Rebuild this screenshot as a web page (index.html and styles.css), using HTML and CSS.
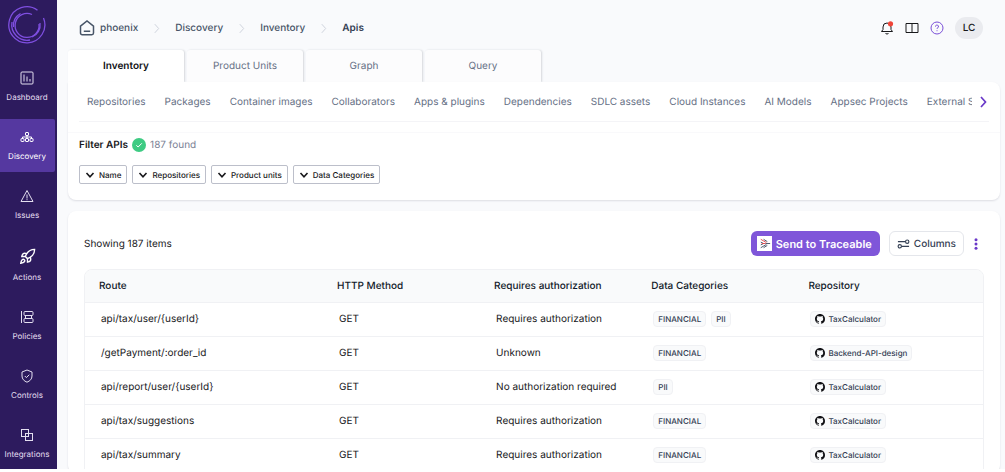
FILE: index.html
```
<!DOCTYPE html>
<html lang="en">
<head>
    <meta charset="UTF-8">
    <meta name="viewport" content="width=device-width, initial-scale=1.0">
    <title>Inventory - Apis</title>
    <link rel="stylesheet" href="styles.css">
</head>
<body>
    <!-- shared icons -->
    <svg class="sprite" aria-hidden="true">
        <symbol id="chevron-right" viewBox="0 0 8 12"><path d="M2 1l4.500 5L2 11"/></symbol>
        <symbol id="chevron-down" viewBox="0 0 10 8"><path d="M1.500 2L5 5.800 8.500 2"/></symbol>
        <symbol id="github" viewBox="0 0 16 16"><path d="M8 0C3.580 0 0 3.580 0 8c0 3.540 2.290 6.530 5.470 7.590.4.070.55-.17.55-.38 0-.19-.01-.82-.01-1.490-2.010.37-2.530-.49-2.690-.94-.09-.23-.48-.94-.82-1.130-.28-.15-.68-.52-.01-.53.63-.01 1.080.58 1.230.82.72 1.210 1.870.87 2.330.66.07-.52.28-.87.51-1.070-1.780-.2-3.640-.89-3.640-3.950 0-.87.31-1.590.82-2.150-.08-.2-.36-1.020.08-2.120 0 0 .67-.21 2.200.82A7.600 7.600 0 0 1 8 3.870c.68 0 1.360.09 2 .27 1.530-1.040 2.200-.82 2.200-.82.44 1.100.16 1.920.08 2.120.51.56.82 1.270.82 2.150 0 3.070-1.870 3.750-3.650 3.950.29.25.54.73.54 1.480 0 1.070-.01 1.930-.01 2.200 0 .21.15.46.55.38A8 8 0 0 0 16 8c0-4.420-3.580-8-8-8z"/></symbol>
    </svg>

    <div class="app">
        <aside class="sidebar">
            <a href="#" class="logo" aria-label="Home">
                <svg viewBox="0 0 38 38">
                    <path d="M29.500 4.300A18 18 0 1 0 35.500 12"/>
                    <path d="M24 8.500A12 12 0 1 0 31 18"/>
                    <path d="M4 16a15.500 15.500 0 0 0 18 18"/>
                    <path d="M32 17a13 13 0 0 1-8 14M5.500 21a14 14 0 0 1 7-13.500"/>
                </svg>
            </a>
            <nav class="side-nav">
                <a href="#" class="side-link">
                    <svg viewBox="0 0 14 14"><rect x="1" y="1" width="12" height="12" rx="1"/><path d="M4 3.500v7M7 5.500v5M10 8v2.500"/></svg>
                    <span>Dashboard</span>
                </a>
                <a href="#" class="side-link active">
                    <svg viewBox="0 0 14 14"><rect x="5.500" y="2.500" width="3" height="3" rx=".5"/><rect x="1" y="8.500" width="3" height="3" rx=".5"/><rect x="5.500" y="8.500" width="3" height="3" rx=".5"/><rect x="10" y="8.500" width="3" height="3" rx=".5"/><path d="M7 5.500v3M2.500 8.500V7h9v1.500"/></svg>
                    <span>Discovery</span>
                </a>
                <a href="#" class="side-link">
                    <svg viewBox="0 0 14 14"><path d="M7 1.500L13 12.500H1zM7 5.500v4M7 10.200v1" stroke-linejoin="round"/></svg>
                    <span>Issues</span>
                </a>
                <a href="#" class="side-link">
                    <svg class="rocket" viewBox="0 0 24 24"><path d="M4.500 16.500c-1.500 1.260-2 5-2 5s3.740-.5 5-2c.71-.84.7-2.130-.09-2.910a2.180 2.180 0 0 0-2.910-.09zM12 15l-3-3a22 22 0 0 1 2-3.950A12.880 12.880 0 0 1 22 2c0 2.720-.78 7.500-6 11a22.350 22.350 0 0 1-4 2zM9 12H4s.55-3.030 2-4c1.620-1.080 5 0 5 0M12 15v5s3.030-.55 4-2c1.080-1.620 0-5 0-5"/></svg>
                    <span>Actions</span>
                </a>
                <a href="#" class="side-link">
                    <svg viewBox="0 0 14 14"><rect x="4" y="1.500" width="9" height="4" rx="1"/><rect x="4" y="8.500" width="9" height="4" rx="1"/><path d="M1.500 1v12M5.500 5.500v3M11.500 5.500v3"/></svg>
                    <span>Policies</span>
                </a>
                <a href="#" class="side-link">
                    <svg viewBox="0 0 14 14"><path d="M7 1l5 2v4c0 3-2 5-5 6.200C4 12 2 10 2 7V3zM4.800 7l1.600 1.600L9.300 5.700" stroke-linejoin="round"/></svg>
                    <span>Controls</span>
                </a>
                <a href="#" class="side-link">
                    <svg viewBox="0 0 14 14"><rect x="1.500" y="1.500" width="7" height="7"/><rect x="5.500" y="5.500" width="7" height="7"/></svg>
                    <span>Integrations</span>
                </a>
            </nav>
        </aside>

        <main class="content">
            <header class="topbar">
                <nav class="breadcrumbs" aria-label="Breadcrumb">
                    <a href="#" class="home">
                        <svg viewBox="0 0 16 16"><path d="M1.500 6.200L8 1l6.500 5.200V13a1.700 1.700 0 0 1-1.700 1.700H3.200A1.700 1.700 0 0 1 1.500 13zM4.800 11.200h6.400"/></svg>
                        phoenix
                    </a>
                    <svg class="sep"><use href="#chevron-right"/></svg>
                    <a href="#">Discovery</a>
                    <svg class="sep"><use href="#chevron-right"/></svg>
                    <a href="#">Inventory</a>
                    <svg class="sep"><use href="#chevron-right"/></svg>
                    <a href="#" class="current">Apis</a>
                </nav>
                <div class="tools">
                    <button class="tool" aria-label="Notifications">
                        <svg viewBox="0 0 14 14"><path d="M1.500 10.500h11L11 8.500V6a4 4 0 0 0-8 0v2.500zM5.500 12a1.600 1.600 0 0 0 3 0"/><circle class="dot" cx="10.500" cy="2.800" r="2.600"/></svg>
                    </button>
                    <button class="tool" aria-label="Documentation">
                        <svg viewBox="0 0 14 14"><path d="M1 2.500h12v9H1zM7 2.500v9"/></svg>
                    </button>
                    <button class="tool help" aria-label="Help">
                        <svg viewBox="0 0 14 14"><circle cx="7" cy="7" r="6"/><path d="M5.500 5.600a1.500 1.500 0 1 1 2.300 1.200c-.6.4-.8.600-.8 1.200M7 9.300v.9"/></svg>
                    </button>
                    <button class="avatar">LC</button>
                </div>
            </header>

            <nav class="main-tabs">
                <a href="#" class="active">Inventory</a>
                <a href="#">Product Units</a>
                <a href="#">Graph</a>
                <a href="#">Query</a>
            </nav>

            <section class="panel filter-panel">
                <div class="sub-nav">
                    <nav class="sub-tabs">
                        <a href="#">Repositories</a>
                        <a href="#">Packages</a>
                        <a href="#">Container images</a>
                        <a href="#">Collaborators</a>
                        <a href="#">Apps &amp; plugins</a>
                        <a href="#">Dependencies</a>
                        <a href="#">SDLC assets</a>
                        <a href="#">Cloud Instances</a>
                        <a href="#">AI Models</a>
                        <a href="#">Appsec Projects</a>
                        <a href="#">External Services</a>
                    </nav>
                    <button class="scroll-btn" aria-label="Scroll right"><svg><use href="#chevron-right"/></svg></button>
                </div>
                <div class="filters">
                    <div class="filter-title">
                        <h2>Filter APIs</h2>
                        <svg class="check" viewBox="0 0 14 14"><circle cx="7" cy="7" r="7"/><path d="M4.300 7.300l1.800 1.700L9.800 5.300"/></svg>
                        <span class="found">187 found</span>
                    </div>
                    <div class="filter-row">
                        <button class="filter-btn"><svg><use href="#chevron-down"/></svg>Name</button>
                        <button class="filter-btn"><svg><use href="#chevron-down"/></svg>Repositories</button>
                        <button class="filter-btn"><svg><use href="#chevron-down"/></svg>Product units</button>
                        <button class="filter-btn"><svg><use href="#chevron-down"/></svg>Data Categories</button>
                    </div>
                </div>
            </section>

            <section class="panel list-panel">
                <div class="list-head">
                    <span class="count">Showing 187 items</span>
                    <button class="send-btn">
                        <svg viewBox="0 0 16 16"><rect width="16" height="16" fill="#fff" stroke="none"/><path d="M4 6.500l3 1.500-3 1.500M4 12.500l6-3.500M7 12.500l4-2.500M7 3.500l4 2.500M9 8h5" stroke="#475467"/><path d="M4 3.500l6 3.500M5 8h4" stroke="#e5484d"/></svg>
                        Send to Traceable
                    </button>
                    <button class="columns-btn">
                        <svg viewBox="0 0 14 12"><path d="M1 3.500h8M5 8.500h8"/><circle cx="11" cy="3.500" r="1.800"/><circle cx="3" cy="8.500" r="1.800"/></svg>
                        Columns
                    </button>
                    <button class="more-btn" aria-label="More"><svg viewBox="0 0 4 12"><circle cx="2" cy="1.700" r="1.500"/><circle cx="2" cy="6" r="1.500"/><circle cx="2" cy="10.300" r="1.500"/></svg></button>
                </div>
                <div class="table-wrap">
                    <table>
                        <thead>
                            <tr>
                                <th class="col-route">Route</th>
                                <th>HTTP Method</th>
                                <th>Requires authorization</th>
                                <th>Data Categories</th>
                                <th class="col-repo">Repository</th>
                            </tr>
                        </thead>
                        <tbody>
                            <tr>
                                <td>api/tax/user/{userId}</td>
                                <td>GET</td>
                                <td>Requires authorization</td>
                                <td><span class="tag">FINANCIAL</span><span class="tag">PII</span></td>
                                <td><span class="tag"><svg><use href="#github"/></svg>TaxCalculator</span></td>
                            </tr>
                            <tr>
                                <td>/getPayment/:order_id</td>
                                <td>GET</td>
                                <td>Unknown</td>
                                <td><span class="tag">FINANCIAL</span></td>
                                <td><span class="tag"><svg><use href="#github"/></svg>Backend-API-design</span></td>
                            </tr>
                            <tr>
                                <td>api/report/user/{userId}</td>
                                <td>GET</td>
                                <td>No authorization required</td>
                                <td><span class="tag">PII</span></td>
                                <td><span class="tag"><svg><use href="#github"/></svg>TaxCalculator</span></td>
                            </tr>
                            <tr>
                                <td>api/tax/suggestions</td>
                                <td>GET</td>
                                <td>Requires authorization</td>
                                <td><span class="tag">FINANCIAL</span></td>
                                <td><span class="tag"><svg><use href="#github"/></svg>TaxCalculator</span></td>
                            </tr>
                            <tr>
                                <td>api/tax/summary</td>
                                <td>GET</td>
                                <td>Requires authorization</td>
                                <td><span class="tag">FINANCIAL</span></td>
                                <td><span class="tag"><svg><use href="#github"/></svg>TaxCalculator</span></td>
                            </tr>
                        </tbody>
                    </table>
                </div>
            </section>
        </main>
    </div>
</body>
</html>
```
FILE: styles.css
```
* {
    box-sizing: border-box;
}
body {
    margin: 0;
    padding-bottom: 3px;
    font-family: Inter, sans-serif;
    font-size: 10px;
    line-height: 14px;
    text-rendering: geometricPrecision;
    color: #18181b;
    background-color: #fff;
    height: 100vh;
    overflow: hidden;
}
a {
    color: inherit;
    text-decoration: none;
}
button {
    font: inherit;
    text-rendering: inherit;
    color: inherit;
    background: none;
    border: 0;
    padding: 0;
    cursor: pointer;
}
svg {
    flex: none;
    fill: none;
    stroke: currentColor;
}
.sprite {
    display: none;
}
.app {
    display: flex;
    height: 100%;
    background-color: #f9fafc;
    overflow: hidden;
}

/* Sidebar */
.sidebar {
    width: 57px;
    flex: none;
    background-color: #2d1b5e;
    color: #e4dff0;
    overflow: hidden;
}
.logo {
    display: block;
    padding: 6px 0 0 8px;
    height: 60px;
    color: #7f4fe0;
}
.logo svg {
    width: 38px;
    height: 38px;
    stroke-width: 1.3;
}
.side-nav {
    display: flex;
    flex-direction: column;
    gap: 6px;
    padding-right: 2px;
}
.side-link {
    display: flex;
    flex-direction: column;
    align-items: center;
    gap: 5px;
    padding: 11px 1px 9px 0;
    font-size: 8px;
    line-height: 14px;
    border-radius: 0 2px 2px 0;
}
.side-link svg {
    width: 14px;
    height: 14px;
}
.side-link .rocket {
    width: 17px;
    height: 17px;
    stroke-width: 2;
    color: #fff;
}
.side-link.active {
    background-color: #5538a0;
    color: #fff;
}

/* Header */
.content {
    flex: 1;
    min-width: 0;
    padding: 0 5px 0 11px;
}
.topbar {
    display: flex;
    align-items: center;
    justify-content: space-between;
    height: 50px;
    padding: 6px 17px 0 11px;
}
.breadcrumbs {
    display: flex;
    align-items: center;
    gap: 15px;
    font-weight: 500;
    color: #475467;
}
.breadcrumbs .home {
    display: flex;
    align-items: center;
    gap: 5px;
}
.home svg {
    width: 16px;
    height: 16px;
    stroke-width: 1.5;
}
.breadcrumbs .sep {
    width: 7px;
    height: 11px;
    color: #c9ced8;
}
.breadcrumbs .current {
    font-weight: 600;
    color: #344054;
}
.tools {
    display: flex;
    align-items: center;
    gap: 11px;
}
.tool,
.tool svg {
    display: block;
    width: 14px;
    height: 14px;
}
.tool .dot {
    fill: #f04438;
    stroke: none;
}
.help {
    color: #7a4fd8;
}
.avatar {
    width: 28px;
    height: 22px;
    border-radius: 11px;
    background-color: #eaebef;
    font-weight: 500;
}

/* Tabs */
.main-tabs {
    display: flex;
    gap: 3px;
}
.main-tabs a {
    width: 116px;
    padding: 9px 0;
    text-align: center;
    color: #667085;
    background-color: #fcfcfd;
    border-radius: 3px 3px 0 0;
    box-shadow: 1px 0 2px #d5d7dc;
}
.main-tabs .active {
    font-weight: 600;
    color: #101014;
    background-color: #fff;
}
.panel {
    background-color: #fff;
    border-radius: 8px;
    box-shadow: 0 1px 2px #dcdde3;
}
.filter-panel {
    position: relative;
    border-top-left-radius: 0;
    padding-bottom: 16px;
}
.sub-nav {
    display: flex;
    align-items: center;
    height: 40px;
    margin: 0 11px;
    padding-left: 8px;
    border-bottom: 1px solid #f4f4f7;
}
.sub-tabs {
    display: flex;
    flex: 1;
    gap: 19px;
    min-width: 0;
    overflow: hidden;
    white-space: nowrap;
    color: #667085;
}
.scroll-btn {
    padding: 0 2px 0 7px;
    color: #6938c8;
}
.scroll-btn svg {
    display: block;
    width: 8px;
    height: 12px;
    stroke-width: 1.7;
}
.filters {
    margin-top: 10px;
    padding: 5px 11px 0;
    border-top: 1px solid #f9f9fb;
}
.filter-title {
    display: flex;
    align-items: center;
    gap: 4px;
}
.filter-title h2 {
    margin: 0;
    font-size: 10px;
    font-weight: 600;
}
.check {
    width: 14px;
    height: 14px;
    stroke: #fff;
}
.check circle {
    fill: #3ecb83;
    stroke: none;
}
.found {
    color: #7a8194;
}
.filter-row {
    display: flex;
    gap: 5px;
    margin-top: 13px;
}
.filter-btn {
    display: flex;
    align-items: center;
    gap: 4px;
    height: 19px;
    padding: 0 5px;
    font-size: 8px;
    font-weight: 500;
    border: 1px solid #bcbfca;
    border-radius: 2px;
}
.filter-btn svg {
    width: 10px;
    height: 8px;
    stroke-width: 1.6;
}

/* Api list */
.list-panel {
    margin-top: 11px;
    padding: 20px 16px 0;
}
.list-head {
    display: flex;
    align-items: center;
}
.count {
    flex: 1;
}
.send-btn,
.columns-btn {
    display: flex;
    align-items: center;
    gap: 4px;
    height: 25px;
    border-radius: 6px;
}
.send-btn {
    padding: 0 8px 0 6px;
    font-size: 11px;
    font-weight: 600;
    color: #fff;
    background-color: #7f56d9;
}
.send-btn svg {
    width: 15px;
    height: 15px;
}
.columns-btn {
    margin-left: 9px;
    padding: 0 7px;
    font-weight: 500;
    color: #344054;
    border: 1px solid #e4e6eb;
}
.columns-btn svg {
    width: 13px;
    height: 12px;
    stroke-width: 1.2;
}
.more-btn {
    padding: 0 6px 0 10px;
}
.more-btn svg {
    display: block;
    width: 4px;
    height: 12px;
    fill: #6938c8;
    stroke: none;
}
.table-wrap {
    margin-top: 13px;
    border: 1px solid #f0f1f4;
    border-radius: 8px 8px 0 0;
    overflow: hidden;
}
table {
    width: 100%;
    table-layout: fixed;
    border-collapse: collapse;
}
th {
    width: 17.5%;
    height: 32px;
    padding: 0 14px;
    text-align: left;
    font-weight: 500;
    color: #101828;
    background-color: #f9fafb;
}
.col-route {
    width: 26.5%;
}
.col-repo {
    width: 21%;
}
td {
    height: 34px;
    padding: 0 16px;
    border-top: 1px solid #f0f1f4;
    white-space: nowrap;
}
.tag {
    display: inline-flex;
    align-items: center;
    gap: 3px;
    height: 16px;
    margin-right: 5px;
    padding: 0 4px;
    font-size: 8px;
    font-weight: 500;
    color: #344054;
    background-color: #f9fafb;
    border: 1px solid #f0f1f4;
    border-radius: 4px;
    vertical-align: middle;
}
.tag svg {
    width: 10px;
    height: 10px;
    fill: #101014;
    stroke: none;
}
```
